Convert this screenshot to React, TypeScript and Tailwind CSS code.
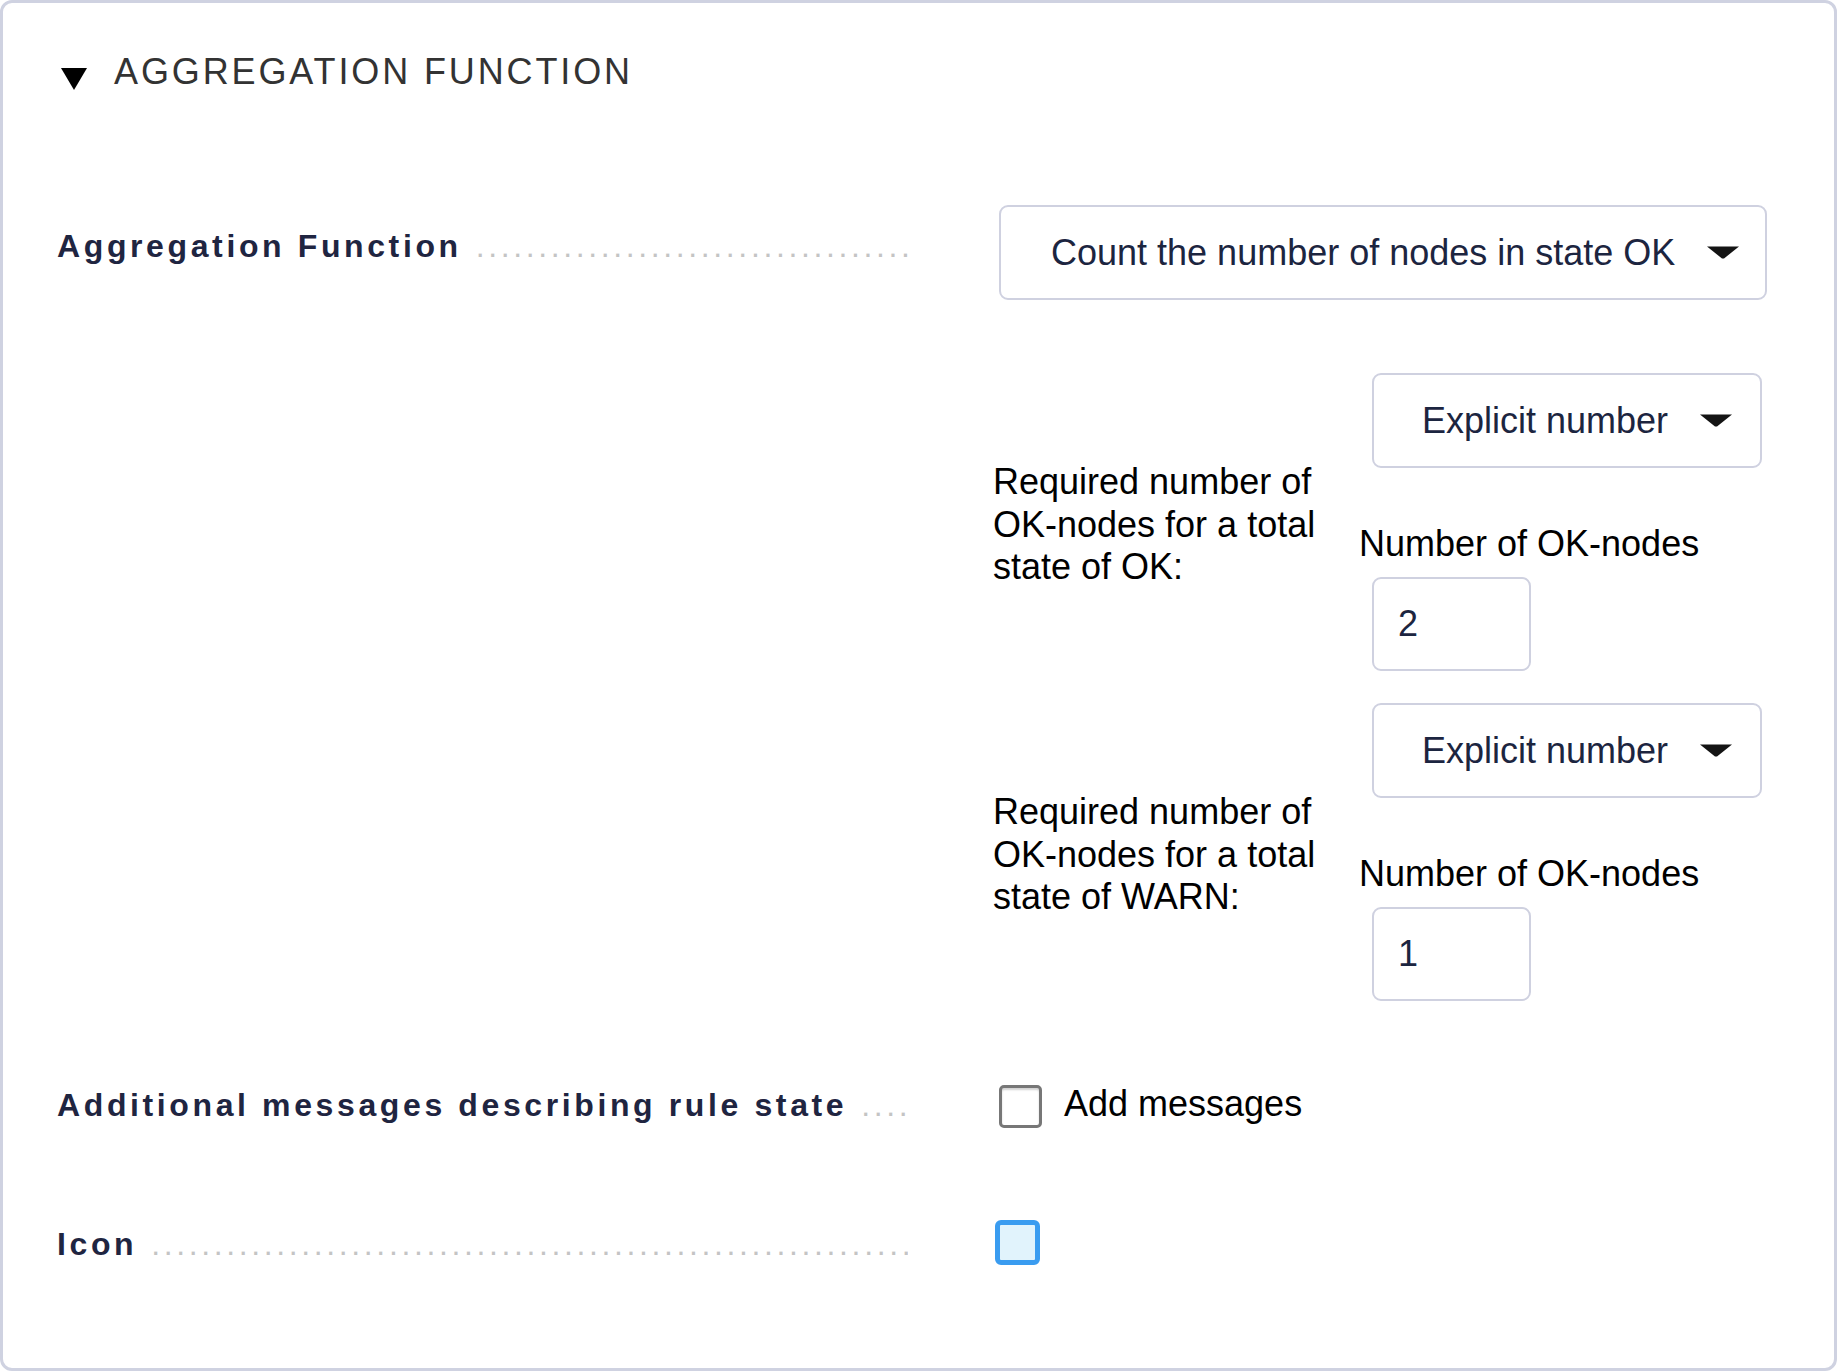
import React from 'react';

const DOTS = '.'.repeat(200);

function Caret() {
  return (
    <svg width="32" height="13" viewBox="0 0 32 13" className="shrink-0">
      <path d="M0 0.5 H32 L17 12.5 H15 Z" fill="#141414" />
    </svg>
  );
}

function Select({ value, className = '' }: { value: string; className?: string }) {
  return (
    <div
      className={`inline-flex items-center self-start h-[95px] pl-[48px] border-2 border-[#cfd1e0] rounded-[9px] bg-white text-[36px] leading-[42px] text-[#1c2540] ${className}`}
    >
      <span className="whitespace-nowrap">{value}</span>
      <span className="ml-[32px] flex items-center">
        <Caret />
      </span>
    </div>
  );
}

function LabelCell({ label, top }: { label: string; top: string }) {
  return (
    <div className={`w-[851px] shrink-0 flex whitespace-nowrap overflow-hidden text-[32px] leading-[40px] ${top}`}>
      <span className="font-bold tracking-[0.113em] text-[#1f2541]">{label}</span>
      <span className="ml-[14px] flex-1 overflow-hidden tracking-[0.113em] text-[#c4c4c4]">{DOTS}</span>
    </div>
  );
}

function CountBlock({ stateName, value, className = '' }: { stateName: string; value: string; className?: string }) {
  return (
    <div className={`flex items-center ${className}`}>
      <div className="w-[366px] shrink-0 pt-[6px] text-[36px] leading-[42.5px] text-black">
        <div>Required number of</div>
        <div>OK-nodes for a total</div>
        <div>state of {stateName}:</div>
      </div>
      <div className="flex flex-col">
        <Select value="Explicit number" className="ml-[13px] pr-[28px]" />
        <div className="mt-[55px] text-[36px] leading-[42px] text-black whitespace-nowrap">Number of OK-nodes</div>
        <div className="ml-[13px] mt-[12px] w-[159px] h-[94px] flex items-center pl-[24px] border-2 border-[#cfd1e0] rounded-[9px] bg-white text-[36px] leading-[42px] text-[#1c2540]">
          {value}
        </div>
      </div>
    </div>
  );
}

export default function App() {
  return (
    <div className="bg-white font-['Liberation_Sans',Arial,sans-serif]">
      <div className="h-[1371px] w-full border-[3px] border-[#cfd2e1] rounded-[12px] overflow-hidden">
        {/* Section header */}
        <div className="flex items-start pl-[58px] pt-[48px]">
          <svg width="26" height="22" viewBox="0 0 26 22" className="mt-[17px] shrink-0">
            <polygon points="0,0 26,0 13,22" fill="#000" />
          </svg>
          <span className="ml-[27px] text-[36px] leading-[42px] tracking-[0.08em] text-[#333333] whitespace-nowrap">
            AGGREGATION FUNCTION
          </span>
        </div>

        <div className="pl-[54px]">
          {/* Aggregation Function */}
          <div className="flex items-start mt-[112px]">
            <LabelCell label="Aggregation Function" top="pt-[21px]" />
            <div className="ml-[85px] flex flex-col">
              <Select value="Count the number of nodes in state OK" className="ml-[6px] pl-[50px] pr-[26px]" />
              <CountBlock stateName="OK" value="2" className="mt-[73px]" />
              <CountBlock stateName="WARN" value="1" className="mt-[32px]" />
            </div>
          </div>

          {/* Additional messages */}
          <div className="flex items-start mt-[82px]">
            <LabelCell label="Additional messages describing rule state" top="pt-[2px]" />
            <div className="ml-[85px] flex items-start">
              <div className="ml-[6px] mt-[2px] w-[43px] h-[43px] rounded-[5px] border-[3px] border-[#777777] bg-white shadow-[inset_0_2px_2px_rgba(0,0,0,0.18)]" />
              <span className="ml-[22px] text-[36px] leading-[42px] text-black whitespace-nowrap">Add messages</span>
            </div>
          </div>

          {/* Icon */}
          <div className="flex items-start mt-[92px]">
            <LabelCell label="Icon" top="pt-[4px]" />
            <div className="ml-[85px] flex items-start">
              <div className="ml-[2px] w-[45px] h-[45px] rounded-[6px] border-[5px] border-[#3a9cf0] bg-[#e1f3fc]" />
            </div>
          </div>
        </div>
      </div>
    </div>
  );
}
